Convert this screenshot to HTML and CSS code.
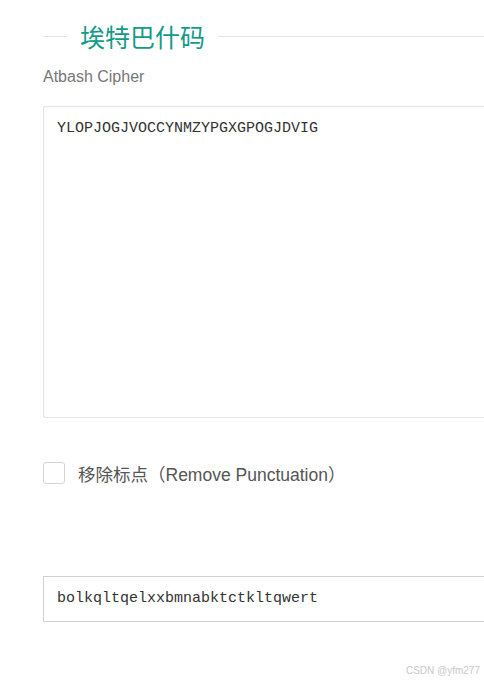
FILE: index.html
```html
<!DOCTYPE html>
<html lang="zh-CN">
<head>
  <meta charset="UTF-8" />
  <title>埃特巴什码</title>
  <link rel="stylesheet" href="styles.css">
</head>
<body>
<main class="tool">
  <header class="tool-head">
    <span class="rule rule-left"></span>
    <h1>埃特巴什码</h1>
    <span class="rule rule-right"></span>
  </header>
  <p class="subtitle">Atbash Cipher</p>

  <div class="box box-input">YLOPJOGJVOCCYNMZYPGXGPOGJDVIG</div>

  <label class="option">
    <span class="check"></span>
    <span class="option-text">移除标点（Remove Punctuation）</span>
  </label>

  <div class="box box-output">bolkqltqelxxbmnabktctkltqwert</div>
</main>
<footer class="mark">CSDN @yfm277</footer>
</body>
</html>
```

FILE: styles.css
```css
* {
  margin: 0; padding: 0; box-sizing: border-box;
}
html, body {
  width: 484px;
  height: 681px;
  overflow: hidden;
}
body {
  background: #fff;
  font-family: "Liberation Sans", "Noto Sans CJK SC", sans-serif;
  color: #555;
  position: relative;
}

.tool {
  padding: 20px 0 0 43px;
}

.tool-head {
  display: flex;
  align-items: center;
  gap: 13px;
  height: 32px;
}
.rule {
  height: 1px;
  background: #e4e4e4;
}
.rule-left {
  width: 24px;
}
.rule-right {
  flex-grow: 1;
}
.tool-head h1 {
  font-family: "Noto Sans CJK SC", sans-serif;
  font-weight: 400;
  font-size: 25px;
  line-height: 32px;
  color: #139a88;
}

.subtitle {
  margin-top: 14px;
  font-size: 16px;
  line-height: 22px;
  color: #777;
}

/* the boxes run off the right edge of the page */
.box {
  font-family: "Liberation Mono", "DejaVu Sans Mono", monospace;
  font-size: 15px;
  color: #333;
  border-right: none;
}
.box-input {
  margin-top: 18px;
  height: 312px;
  border: 1px solid #e3e3e3;
  border-right: none;
  border-radius: 3px 0 0 3px;
  padding: 12px 13px;
  line-height: 20px;
}

.option {
  display: flex;
  align-items: center;
  gap: 13px;
  margin-top: 44px;
  height: 22px;
}
.check {
  width: 22px;
  height: 22px;
  border: 1px solid #d4d4d4;
  border-radius: 3px;
}
.option-text {
  font-size: 17.5px;
  color: #555;
}

.box-output {
  margin-top: 92px;
  height: 46px;
  border: 1px solid #d0d0d0;
  border-right: none;
  padding: 0 13px;
  line-height: 44px;
}

.mark {
  position: absolute;
  right: 4px;
  bottom: 5px;
  font-size: 10px;
  color: #c8c8c8;
}
```
